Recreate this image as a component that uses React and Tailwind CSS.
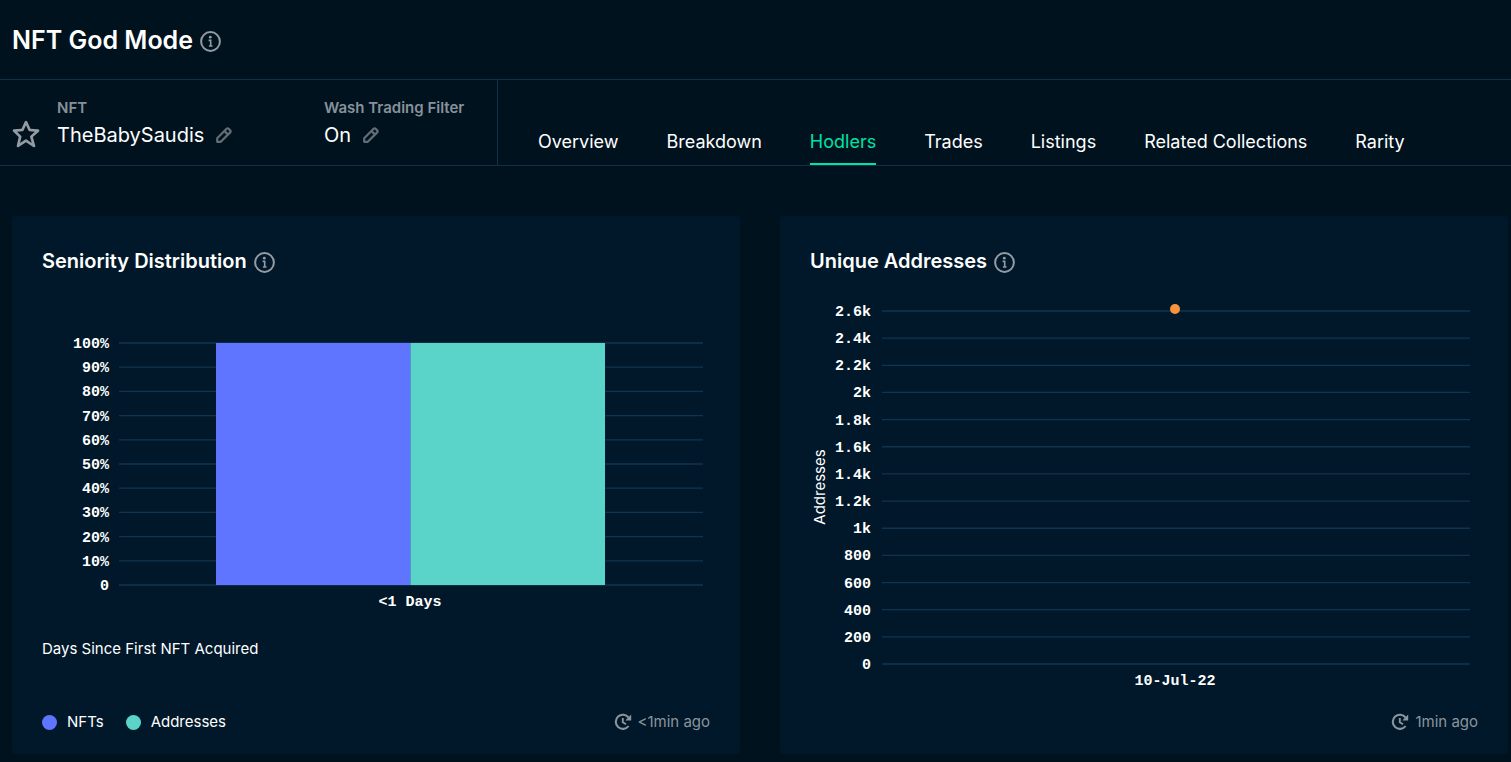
import React from 'react';
import { BiStar } from 'react-icons/bi';

const TABS = ['Overview', 'Breakdown', 'Hodlers', 'Trades', 'Listings', 'Related Collections', 'Rarity'];

const PERCENT_TICKS = ['100%', '90%', '80%', '70%', '60%', '50%', '40%', '30%', '20%', '10%', '0'];

const ADDRESS_TICKS = [
  '2.6k', '2.4k', '2.2k', '2k', '1.8k', '1.6k', '1.4k', '1.2k', '1k', '800', '600', '400', '200', '0',
];

const InfoIcon = () => (
  <svg viewBox="0 0 21 21" className="size-[21px]" fill="none" stroke="currentColor" strokeWidth="2">
    <circle cx="10.5" cy="10.5" r="9.4" />
    <circle cx="10.3" cy="6.2" r="1.4" fill="currentColor" stroke="none" />
    <path d="M8.6 9.4h2.1v5.4M8.9 15h3.6" strokeWidth="1.6" />
  </svg>
);

const PencilIcon = () => (
  <svg viewBox="0 0 16 16" className="size-4" fill="none" stroke="currentColor" strokeWidth="2.2" strokeLinejoin="round">
    <path d="M1.2 14.8v-3.6L10.6 1.8a1.4 1.4 0 0 1 2 0l1.6 1.6a1.4 1.4 0 0 1 0 2L4.8 14.8z" />
    <path d="M8.4 4l3.6 3.6" />
  </svg>
);

const UpdateIcon = () => (
  <svg viewBox="0 0 18 18" className="size-[18px]" fill="none" stroke="currentColor" strokeWidth="2.1">
    <path d="M14.6 4.6A7.1 7.1 0 1 0 14.6 13" />
    <path d="M17.2 1.5V7.4h-5.9z" fill="currentColor" stroke="none" />
    <path d="M8.8 5v4.2l3.2 2" strokeWidth="1.9" />
  </svg>
);

const InfoButton = ({ label }) => (
  <button type="button" aria-label={label} className="mt-[3px] text-[#939ba3]">
    <InfoIcon />
  </button>
);

const Filter = ({ label, value, className }) => (
  <div className={className}>
    <div className="text-[15px] leading-5 font-semibold text-[#87919a]">{label}</div>
    <div className="mt-[3px] flex items-center gap-3 text-xl leading-7">
      {value}
      <button type="button" aria-label={`Edit ${label}`} className="text-[#626d76]">
        <PencilIcon />
      </button>
    </div>
  </div>
);

const GridLines = ({ ticks, top, bottom, labelX, left, right }) =>
  ticks.map((tick, i) => {
    const y = top + ((bottom - top) * i) / (ticks.length - 1);
    return (
      <g key={tick}>
        <line x1={left} x2={right} y1={y} y2={y} stroke="#10344f" strokeWidth="1.3" />
        <text x={labelX} y={y + 5} textAnchor="end">{tick}</text>
      </g>
    );
  });

const chartText = "w-full font-['Liberation_Mono',monospace] text-[15px] font-bold fill-white";

const SeniorityChart = () => (
  <svg viewBox="0 0 668 350" className={chartText}>
    <GridLines ticks={PERCENT_TICKS} top={57} bottom={299} labelX={67} left={77} right={661} />
    <rect x="174" y="57" width="194" height="242" fill="#5f75ff" />
    <rect x="368" y="57" width="195" height="242" fill="#5ad3c9" />
    <line x1="368.5" x2="368.5" y1="57" y2="299" stroke="#4d9fbd" />
    <text x="368" y="320" textAnchor="middle">&lt;1 Days</text>
  </svg>
);

const AddressesChart = () => (
  <svg viewBox="0 0 668 420" className={chartText}>
    <GridLines ticks={ADDRESS_TICKS} top={25} bottom={378} labelX={61} left={72} right={660} />
    <circle cx="365" cy="23" r="5" fill="#fb923c" />
    <text x="365" y="399" textAnchor="middle">10-Jul-22</text>
    <text
      transform="translate(15 201) rotate(-90)"
      textAnchor="middle"
      className="font-['Inter',sans-serif] text-[15px] font-normal"
    >
      Addresses
    </text>
  </svg>
);

const Card = ({ title, children, legend, updated }) => (
  <section className="flex flex-col rounded bg-[#001829] px-[30px] pt-[30px] pb-[22px]">
    <div className="flex items-center gap-[7px]">
      <h2 className="text-xl leading-[30px] font-semibold">{title}</h2>
      <InfoButton label={`About ${title}`} />
    </div>
    {children}
    <div className="mt-auto flex items-center justify-between text-[15px] leading-5">
      <div className="flex gap-[22px]">{legend}</div>
      <div className="flex items-center gap-1.5 text-[#8b959e]">
        <UpdateIcon />
        {updated}
      </div>
    </div>
  </section>
);

const App = () => {
  return (
    <div className="min-h-screen bg-[#00121e] font-['Inter',sans-serif] text-white">
      <header className="flex h-20 items-center gap-[7px] border-b border-[#10304a] px-3">
        <h1 className="text-[25px] leading-8 font-semibold">NFT God Mode</h1>
        <InfoButton label="About NFT God Mode" />
      </header>

      <div className="flex border-b border-[#10304a]">
        <div className="flex w-[498px] shrink-0 items-start border-r border-[#10304a] pt-[18px] pb-[15px] pl-[10px]">
          <button type="button" aria-label="Favorite" className="mt-5 mr-[15px] text-[#939ba3]">
            <BiStar className="size-8" />
          </button>
          <Filter label="NFT" value="TheBabySaudis" className="w-[267px]" />
          <Filter label="Wash Trading Filter" value="On" />
        </div>
        <nav className="flex items-end gap-12 pl-10 text-lg leading-6">
          {TABS.map((tab) => (
            <a
              key={tab}
              href="#"
              className={
                tab === 'Hodlers'
                  ? 'rounded-t-sm border-b-2 border-[#00e2a6] pb-[9px] text-[#00e2a6]'
                  : 'border-b-2 border-transparent pb-[9px]'
              }
            >
              {tab}
            </a>
          ))}
        </nav>
      </div>

      <main className="grid grid-cols-2 gap-10 pt-[50px] pr-[3px] pb-2 pl-3">
        <Card
          title="Seniority Distribution"
          updated="<1min ago"
          legend={
            <>
              <span className="flex items-center gap-2.5">
                <i className="size-[15px] rounded-full bg-[#5f75ff]" />
                NFTs
              </span>
              <span className="flex items-center gap-2.5">
                <i className="size-[15px] rounded-full bg-[#5ad3c9]" />
                Addresses
              </span>
            </>
          }
        >
          <div className="mt-2.5">
            <SeniorityChart />
          </div>
          <p className="mt-[3px] text-[15px] leading-5">Days Since First NFT Acquired</p>
        </Card>
        <Card title="Unique Addresses" updated="1min ago">
          <div className="mt-2.5 mb-1.5">
            <AddressesChart />
          </div>
        </Card>
      </main>
    </div>
  );
};

export default App;
